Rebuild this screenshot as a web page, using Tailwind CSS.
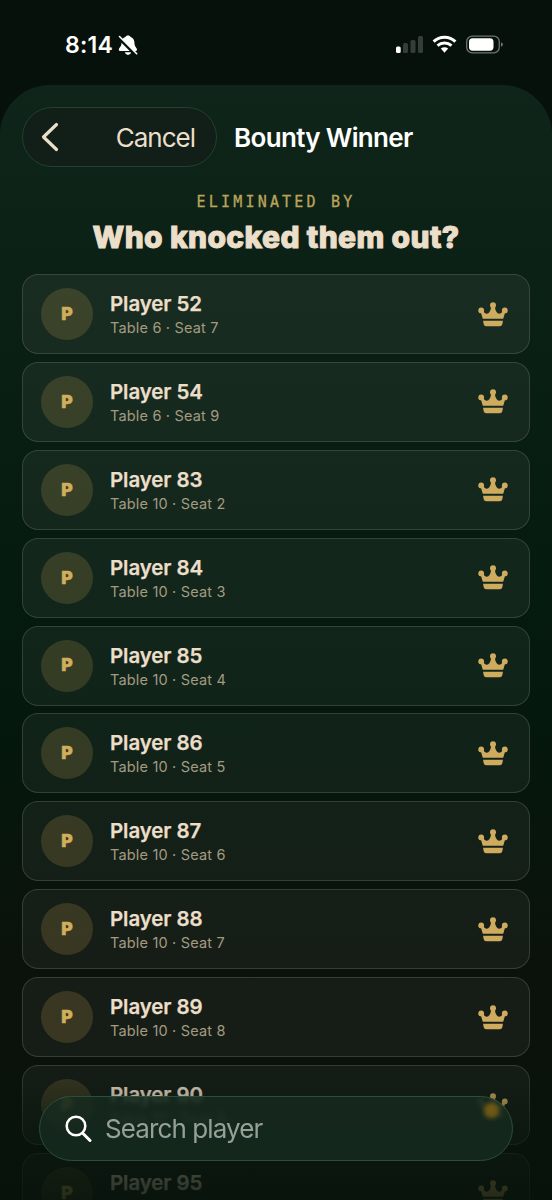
<!DOCTYPE html>
<html lang="en">
<head>
<meta charset="utf-8">
<title>Bounty Winner</title>
<script src="https://cdn.jsdelivr.net/npm/@tailwindcss/browser@4"></script>
</head>
<body class="h-[1200px] w-[552px] overflow-hidden bg-[#07110c] font-['Inter',sans-serif]">
<svg class="hidden"><symbol id="crown" viewBox="0 0 30 25"><g fill="currentColor"><circle cx="3.200" cy="8.400" r="2.900"/><circle cx="15" cy="3.300" r="3"/><circle cx="26.800" cy="8.400" r="2.900"/><path d="M2.600 9.500L5 8.500Q6.600 12 8.800 11.800Q12.200 11.300 13.300 4.500h3.400Q17.800 11.300 21.200 11.800Q23.400 12 25 8.500L27.400 9.500L25.200 16.700H4.800Z"/><path d="M5.100 18.700H24.900L24.400 22Q23.900 24.300 21.700 24.300H8.300Q6.100 24.300 5.600 22Z"/></g></symbol></svg>
<div class="relative flex h-full flex-col">
  <header class="flex h-[85px] shrink-0 items-start justify-between pt-[33px] pr-[48px] pl-[65px] text-white">
    <div class="flex items-center gap-[5px]">
      <span class="text-[23px] leading-6 font-semibold tracking-[0.200px]">8:14</span>
      <svg width="20" height="22" viewBox="0 0 20 22"><path fill="#fff" d="M10 1.500C8.700 1.500 7.700 2.100 7.300 3C4.300 4.200 3.500 6.700 3.500 9.300C3.500 13 .8 13.500 .8 15.800Q.8 17 2 17H17.500Q19 17 19 15.500C18.900 13.600 16.500 13 16.500 9.300C16.500 6.500 15.500 4.200 12.700 3C12.300 2.100 11.300 1.500 10 1.500ZM6.800 18.300H13.200Q12.500 21 10 21Q7.500 21 6.800 18.300Z"/><path d="M.5 3.500L17.500 20.500" stroke="#07110c" stroke-width="3.200"/><path d="M1.500 2.500L18.700 19.700" stroke="#fff" stroke-width="1.600" stroke-linecap="round"/></svg>
    </div>
    <svg class="mt-[2px]" width="109" height="20" viewBox="0 0 109 20" fill="none"><rect x="1" y="11.500" width="4.700" height="6.500" rx="1.500" fill="#fff"/><g fill="#343d38"><rect x="8" y="8" width="5" height="10" rx="1.500"/><rect x="15.500" y="5" width="5" height="13" rx="1.500"/><rect x="23" y="1" width="5" height="17" rx="1.500"/></g><g stroke="#fff" stroke-width="3"><path d="M38.600 6.600C44.700.8 54.300.8 60.400 6.600M42.500 10.700C46.500 7.200 52.500 7.200 56.500 10.700"/><path d="M45.800 13.600Q49.500 10.900 53.200 13.600L49.500 17.700Z" fill="#fff" stroke="none"/></g><rect x="71.700" y="1.200" width="32.600" height="16.600" rx="5.500" stroke="#6e7571" stroke-width="1.300"/><rect x="74" y="3.300" width="24.500" height="12.400" rx="3.600" fill="#fff"/><path d="M106 7.200Q108 8 108 9.500T106 11.800Z" fill="#6e7571"/></svg>
  </header>
  <main class="flex h-[1115px] shrink-0 flex-col overflow-hidden rounded-t-[50px] bg-linear-to-b from-[#10251a] via-[#04180d] via-57% to-[#0a120b] to-78% px-[22px] pt-[22px]">
    <div class="flex h-[60px] shrink-0 items-center">
      <div class="flex h-[60px] w-[195px] items-center justify-between rounded-full border border-[#21422f] bg-[#121e18] pr-[21px] pl-[18px] text-[#eadfc8]">
        <svg width="19" height="30" viewBox="0 0 19 30"><path d="M15.500 2.500L2.500 15L15.500 27.500" fill="none" stroke="currentColor" stroke-width="3.200" stroke-linecap="round" stroke-linejoin="round"/></svg>
        <span class="text-[26px] tracking-[-1px]">Cancel</span>
      </div>
      <h1 class="ml-[17px] text-[26px] font-semibold tracking-[-0.650px] whitespace-nowrap text-white">Bounty Winner</h1>
    </div>
    <p class="mt-[26px] text-center font-['DejaVu_Sans_Mono',monospace] text-[15px] leading-[18px] tracking-[3.200px] text-[#bba45a] [-webkit-text-stroke:0.300px_#bba45a]">ELIMINATED BY</p>
    <h2 class="mt-[7px] h-[38px] shrink-0 text-center text-[30px] leading-[38px] font-extrabold tracking-[0.350px] whitespace-nowrap text-[#ecdfca] [-webkit-text-stroke:1px_#ecdfca]">Who knocked them out?</h2>
    <ul id="players" class="mt-[18px] flex flex-col gap-[7.900px]"></ul>
  </main>
  <div class="absolute inset-x-0 top-[1060px] h-[140px] bg-linear-to-b from-[#06140b]/0 via-[#06140b]/70 via-65% to-[#06120a]/85"></div>
  <div class="absolute top-[1096px] left-[39px] flex h-[65px] w-[474px] items-center gap-[13px] rounded-full border border-[#2a5039] bg-[#162a1f]/85 pl-[25px] backdrop-blur-[2px]">
    <svg width="27" height="28" viewBox="0 0 27 28" fill="none" stroke="#fff" stroke-width="2.500" stroke-linecap="round"><circle cx="11" cy="11" r="9.300"/><path d="M18 18.500L25 25.500" stroke-width="3"/></svg>
    <span class="text-[26px] tracking-[-0.900px] text-[#95a099]">Search player</span>
    <span class="absolute top-[6px] left-[444px] size-[15px] rounded-full bg-[#8a6510]/75 blur-[2px]"></span>
  </div>
</div>
<script>
const players = [[52,6,7],[54,6,9],[83,10,2],[84,10,3],[85,10,4],[86,10,5],[87,10,6],[88,10,7],[89,10,8],[90,10,9],[95,11,5]];
document.getElementById('players').innerHTML = players.map(([n,t,s]) => `
<li class="flex h-[80px] shrink-0 items-center rounded-[16px] border border-[#c9b890]/20 bg-[#d8dce0]/6 pr-[21.500px] pl-[18px]">
  <div class="flex size-[52px] items-center justify-center rounded-full bg-[#c9a050]/20 text-[17.500px] font-black text-[#cfae5c] [-webkit-text-stroke:0.400px_#cfae5c]">P</div>
  <div class="ml-[17px] flex-1 pt-[2px]"><div class="text-[20.500px] leading-[26px] font-semibold tracking-[-0.100px] text-[#ecdfca] [-webkit-text-stroke:0.250px_#ecdfca]">Player ${n}</div><div class="text-[14.500px] leading-[22px] tracking-[0.180px] text-[#a39b80]">Table ${t} · Seat ${s}</div></div>
  <svg class="text-[#cfab60]" width="30" height="25"><use href="#crown"/></svg>
</li>`).join('');
</script>
</body>
</html>
